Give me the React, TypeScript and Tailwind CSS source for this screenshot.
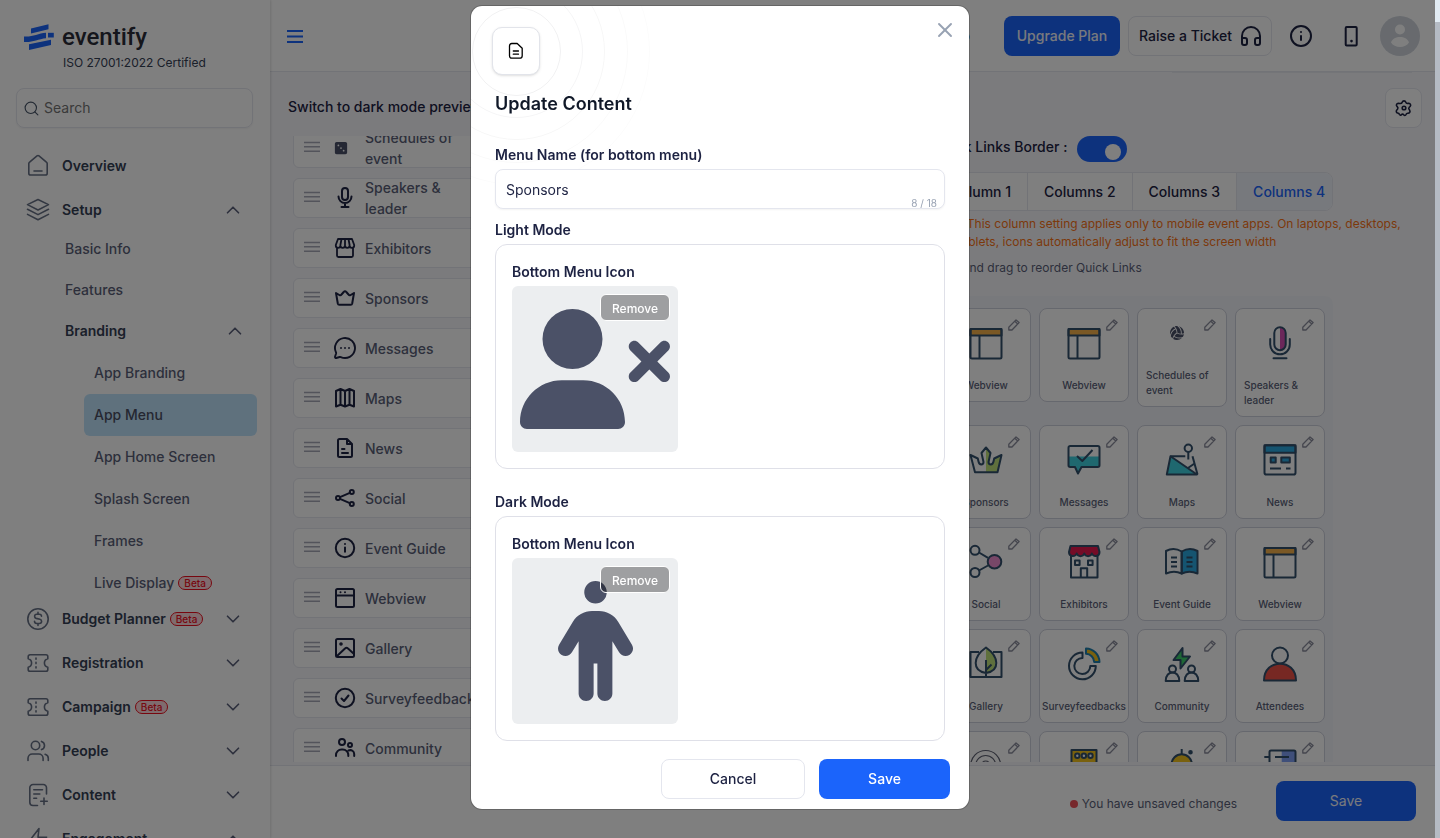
import type { ReactNode } from "react"
import { Headphones, Info, MessageCircleMore, Search, ChevronDown, ChevronUp, X } from "lucide-react"
import { FaDiceThree, FaPerson, FaUserXmark, FaVolleyball } from "react-icons/fa6"

type IconProps = { children: ReactNode; className?: string }

function Line({ children, className = "size-6" }: IconProps) {
  return (
    <svg
      aria-hidden="true"
      viewBox="0 0 24 24"
      fill="none"
      stroke="currentColor"
      strokeWidth="2"
      strokeLinecap="round"
      strokeLinejoin="round"
      className={`${className} shrink-0`}
    >
      {children}
    </svg>
  )
}

function Tile({ children }: { children: ReactNode }) {
  return (
    <svg
      aria-hidden="true"
      viewBox="0 0 34 34"
      fill="none"
      stroke="#33506d"
      strokeWidth="2"
      strokeLinejoin="round"
      className="size-[34px] overflow-visible"
    >
      {children}
    </svg>
  )
}

/* Sidebar icons */

const OverviewIcon = (
  <Line className="size-6 stroke-[1.6]">
    <path d="M2.8 9.6v9.6c0 1 .8 1.8 1.8 1.8h14.8c1 0 1.8-.8 1.8-1.8V9.6c0-.6-.3-1.1-.8-1.5L13 1.9a1.6 1.6 0 0 0-2 0L3.6 8.1c-.5.4-.8.9-.8 1.5z" />
    <path d="M8 17h8" />
  </Line>
)
const SetupIcon = (
  <Line className="size-6 stroke-[1.6]">
    <path d="M12 1.500 22.500 6.600 12 12 1.500 6.600z" />
    <path d="m1.500 11.300 10.500 5.300 10.500-5.300" />
    <path d="m1.500 16.400 10.500 5.300 10.500-5.300" />
  </Line>
)
const BudgetIcon = (
  <Line className="size-6 stroke-[1.6]">
    <circle cx="12" cy="12" r="10.200" />
    <path d="M8.500 14.300c0 1.300 1 2.200 2.300 2.200h2.600c1.200 0 2.200-1 2.200-2.200 0-1-.7-1.900-1.700-2.100l-3.700-.8a2.100 2.100 0 0 1-1.600-2.100c0-1.200 1-2.100 2.200-2.100h2.500c1.200 0 2.200.9 2.200 2.100M12 5.400v1.800m0 9.400v1.900" />
  </Line>
)
const TicketIcon = (
  <Line className="size-6 stroke-[1.6]">
    <path d="M4 3.800h16c1 0 1.800.8 1.800 1.800v2.200a4.300 4.300 0 0 0 0 8.400v2.200c0 1-.8 1.800-1.800 1.800H4c-1 0-1.800-.8-1.800-1.800v-2.200a4.300 4.300 0 0 0 0-8.400V5.600c0-1 .8-1.800 1.800-1.800z" />
    <path d="M10 7v1.200m0 3.200v1.200m0 3.200V17" />
  </Line>
)
const PeopleIcon = (
  <Line className="size-6 stroke-[1.6]">
    <circle cx="9.500" cy="6.500" r="4.200" />
    <path d="M2 21.500v-2.200a4.300 4.300 0 0 1 4.300-4.300h6.500a4.300 4.300 0 0 1 4.300 4.300v2.200M15.500 2.400a4.300 4.300 0 0 1 0 8.200M22.300 21.500v-2.200c0-2-1.300-3.600-3.200-4.100" />
  </Line>
)
const ContentIcon = (
  <Line className="size-6 stroke-[1.6]">
    <path d="M20.500 11V4.800c0-1.800-1.400-3.300-3.200-3.300H7C5.200 1.500 3.800 3 3.800 4.800v14.400c0 1.800 1.400 3.300 3.200 3.300h4.500M7.800 6.800h8.700M7.800 11h6M7.800 15.200h2.800M18 15v6.500M14.700 18.300h6.600" />
  </Line>
)
const EngageIcon = (
  <Line className="size-6 stroke-[1.6]">
    <path d="M13 1.500 3.500 13.800H12L11 22.500 20.500 10.200H12z" />
  </Line>
)

function BetaTag() {
  return (
    <span className="ml-1 rounded-full border border-[#ef0f1f] bg-[#ffd9dc] px-[5px] text-[10px] leading-3 font-medium text-[#ef0f1f]">
      Beta
    </span>
  )
}

const SECTIONS = [
  { title: "Budget Planner", icon: BudgetIcon, beta: true, up: false },
  { title: "Registration", icon: TicketIcon, beta: false, up: false },
  { title: "Campaign", icon: TicketIcon, beta: true, up: false },
  { title: "People", icon: PeopleIcon, beta: false, up: false },
  { title: "Content", icon: ContentIcon, beta: false, up: false },
  { title: "Engagement", icon: EngageIcon, beta: false, up: true },
]

const BRANDING = ["App Branding", "App Menu", "App Home Screen", "Splash Screen", "Frames", "Live Display"]

function Logo() {
  return (
    <a href="#" className="ml-6 flex h-[33px] shrink-0 items-center gap-2">
      <svg aria-hidden="true" viewBox="0 0 30 26" className="h-[26px] w-[30px] fill-[#1b64fb]">
        <path d="M7 4.500 24.500.2v5L7 9.500z" />
        <path d="M0 12.500c8 .8 14-3 22-3.700v5.500c-8 .8-14 4.500-22 3.700z" />
        <path d="M24 8.800h5.800v4.700H24z" />
        <path d="M5 20.300 27 15.700v5.200L5 26z" />
      </svg>
      <span className="font-['Roboto',sans-serif] text-2xl leading-8 font-medium text-[#2b2d38]">eventify</span>
    </a>
  )
}

function Sidebar() {
  return (
    <aside className="z-10 flex w-[270px] shrink-0 flex-col overflow-hidden bg-white pt-5 shadow-[1px_0_2px_rgba(0,0,0,0.12)]">
      <Logo />
      <p className="ml-[63px] text-xs leading-5 text-[#344054]">ISO 27001:2022 Certified</p>
      <label className="mt-[15px] mr-[17px] ml-4 flex h-10 shrink-0 items-center gap-1 rounded-lg border border-[#e4e6ee] px-1.5 shadow-xs">
        <Search className="size-[17px] shrink-0 text-[#475467]" strokeWidth={1.6} />
        <input
          type="text"
          aria-label="Search"
          placeholder="Search"
          className="w-full bg-transparent text-sm outline-none placeholder:text-[#757575]"
        />
      </label>

      <nav className="mt-[22px] text-sm text-[#5a5f78]">
        <a href="#" className="mb-3 flex h-8 items-center gap-3 pl-[26px] font-semibold text-[#344054]">
          <span className="text-[#667085]">{OverviewIcon}</span>
          Overview
        </a>
        <button className="flex h-8 w-full items-center gap-3 pr-[26px] pl-[26px] font-semibold text-[#344054]">
          <span className="text-[#667085]">{SetupIcon}</span>
          Setup
          <ChevronUp className="ml-auto size-[22px] text-[#5a607a]" strokeWidth={1.8} />
        </button>
        <ul className="mt-0.5 font-medium">
          <li>
            <a href="#" className="flex h-[41px] items-center pl-[65px]">Basic Info</a>
          </li>
          <li>
            <a href="#" className="flex h-[41px] items-center pl-[65px]">Features</a>
          </li>
          <li>
            <button className="flex h-[42px] w-full items-center pr-6 pl-[65px] font-semibold text-[#344054]">
              Branding
              <ChevronUp className="ml-auto size-[22px] text-[#5a607a]" strokeWidth={1.8} />
            </button>
            <ul className="-mb-px mr-[13px] ml-[84px]">
              {BRANDING.map((item) => (
                <li key={item}>
                  <a
                    href="#"
                    className={`flex h-[42px] items-center rounded-md pl-2.5 ${
                      item === "App Menu" ? "bg-[#bfe3fb] text-[#4a4e63]" : ""
                    }`}
                  >
                    {item}
                    {item === "Live Display" && <BetaTag />}
                  </a>
                </li>
              ))}
            </ul>
          </li>
        </ul>
        {SECTIONS.map((s) => (
          <button
            key={s.title}
            className="mb-3 flex h-8 w-full items-center pr-[26px] pl-[26px] font-semibold text-[#344054]"
          >
            <span className="mr-3 text-[#667085]">{s.icon}</span>
            {s.title}
            {s.beta && <BetaTag />}
            {s.up ? (
              <ChevronUp className="ml-auto size-[22px] text-[#5a607a]" strokeWidth={1.8} />
            ) : (
              <ChevronDown className="ml-auto size-[22px] text-[#5a607a]" strokeWidth={1.8} />
            )}
          </button>
        ))}
      </nav>
    </aside>
  )
}

function Header() {
  return (
    <header className="flex h-[72px] shrink-0 items-center border-b border-[#e4e6ee] bg-white pr-[15px] pl-[17px] text-[#1d2242]">
      <button aria-label="Toggle sidebar" className="text-[#1b64fb]">
        <svg aria-hidden="true" viewBox="0 0 16 14" className="h-3.5 w-4" stroke="currentColor" strokeWidth="2.200">
          <path d="M0 2h16M0 7.500h16M0 13h16" />
        </svg>
      </button>
      <a href="#" className="mr-[34px] ml-auto text-sm font-medium">Help</a>
      <button className="h-10 w-[116px] rounded-lg bg-[#1b64fb] text-sm font-medium text-[#f2f4fa]">Upgrade Plan</button>
      <button className="ml-2 flex h-10 w-36 items-center justify-between rounded-lg border border-[#e4e6ee] pr-2 pl-2.5 text-sm font-medium">
        Raise a Ticket
        <Headphones className="size-6" strokeWidth={2} />
      </button>
      <button aria-label="Information" className="ml-[17px]">
        <Info className="size-6" strokeWidth={2} />
      </button>
      <button aria-label="Mobile preview" className="ml-[26px]">
        <Line>
          <rect x="6.700" y="3" width="11" height="18.500" rx="1" />
          <path d="M12.500 17v.1" strokeWidth="2.600" />
        </Line>
      </button>
      <button aria-label="Account" className="ml-[17px]">
        <svg aria-hidden="true" viewBox="0 0 40 40" className="size-10">
          <circle cx="20" cy="20" r="20" fill="#d0d5dd" />
          <circle cx="20" cy="13.500" r="5" fill="#fff" />
          <path d="M11 26.500c1.500-4 5-5.500 9-5.500s7.500 1.500 9 5.500c-1.800 2.800-5.200 4.500-9 4.500s-7.200-1.700-9-4.500z" fill="#fff" />
        </svg>
      </button>
    </header>
  )
}

const MENU_ROWS: { name: string; icon: ReactNode }[] = [
  { name: "Schedules of event", icon: <FaDiceThree className="ml-px size-3.5 text-[#4a5068]" /> },
  {
    name: "Speakers & leader",
    icon: (
      <Line>
        <rect x="9" y="2" width="6" height="12" rx="3" />
        <path d="M5.500 10.500a6.500 6.500 0 0 0 13 0M12 17.500V21M8.500 21h7" />
      </Line>
    ),
  },
  {
    name: "Exhibitors",
    icon: (
      <Line className="size-6 stroke-[1.8]">
        <path d="M5 3h14l2.200 6v.5a2.300 2.300 0 0 1-4.600 0 2.300 2.300 0 0 1-4.600 0 2.300 2.300 0 0 1-4.600 0 2.300 2.300 0 0 1-4.600 0V9zM4 12v7.500c0 .8.700 1.500 1.500 1.500h13c.8 0 1.500-.7 1.500-1.500V12M8.500 3l-1.100 6M12 3v6M15.500 3l1.100 6" />
      </Line>
    ),
  },
  {
    name: "Sponsors",
    icon: (
      <Line>
        <path d="M3 7l1.800 10.500c.2.900.7 1.300 1.500 1.300h11.400c.8 0 1.300-.4 1.500-1.300L21 7l-3.300 2c-1 .6-1.700.3-2.200-.5L13.300 6c-.8-1-1.800-1-2.600 0L8.500 8.500c-.5.8-1.200 1.100-2.200.5z" />
      </Line>
    ),
  },
  { name: "Messages", icon: <MessageCircleMore className="size-6" strokeWidth={1.9} /> },
  {
    name: "Maps",
    icon: (
      <Line>
        <path d="M3 5l4.500-2L12 5l4.500-2L21 5v15.500l-4.500-1.800-4.500 1.800-4.500-1.800L3 20.500zM7.500 3v15.700M12 5v15.500M16.500 3v15.700" />
      </Line>
    ),
  },
  {
    name: "News",
    icon: (
      <Line>
        <path d="M14 3H6.500C5.700 3 5 3.700 5 4.500v15c0 .8.700 1.500 1.500 1.500h11c.8 0 1.500-.7 1.500-1.500V8zM14 3v5h5M9 13h2.500M9 17h6" />
      </Line>
    ),
  },
  {
    name: "Social",
    icon: (
      <Line>
        <circle cx="5" cy="12" r="2" />
        <circle cx="18.800" cy="6" r="2" />
        <circle cx="18.800" cy="18" r="2" />
        <path d="m7 11.200 9.800-4.300M7 12.800l9.800 4.300" />
      </Line>
    ),
  },
  {
    name: "Event Guide",
    icon: (
      <Line>
        <circle cx="12" cy="12" r="9.200" />
        <path d="M12 11.500v4.300M12 8v.1" />
      </Line>
    ),
  },
  {
    name: "Webview",
    icon: (
      <Line>
        <rect x="3" y="3" width="18" height="18" rx="1.500" />
        <path d="M3 9.500h18M7.500 6.200v.1M12 6.200v.1" />
      </Line>
    ),
  },
  {
    name: "Gallery",
    icon: (
      <Line>
        <rect x="3" y="3" width="18" height="18" rx="1.500" />
        <circle cx="8" cy="8" r=".8" />
        <path d="m4 20 8-7.500c1-.9 2-.9 3 0l5.500 5" />
      </Line>
    ),
  },
  {
    name: "Surveyfeedbacks",
    icon: (
      <Line>
        <circle cx="12" cy="12" r="9.200" />
        <path d="m8.500 12.500 2.500 2.500 4.500-5.500" />
      </Line>
    ),
  },
  {
    name: "Community",
    icon: (
      <Line>
        <circle cx="9" cy="6" r="3" />
        <circle cx="17" cy="9" r="2" />
        <path d="M3 20v-1a5.500 5.500 0 0 1 5.500-5.500h1.300A5.500 5.500 0 0 1 15.300 19v1M15.500 14.500c3-1.200 5.700.8 5.700 3.500v2" />
      </Line>
    ),
  },
]

function MenuList() {
  return (
    <section className="flex min-w-0 flex-1 flex-col pl-[18px]">
      <h2 className="flex h-16 shrink-0 items-center pt-1.5 text-sm font-medium text-[#1d2242]">
        Switch to dark mode preview
      </h2>
      <div className="min-h-0 flex-1 overflow-hidden pl-[5px]">
        <ul className="-mt-2 flex flex-col gap-2.5">
          {MENU_ROWS.map((row) => (
            <li
              key={row.name}
              className="flex h-10 w-[420px] items-center gap-2 rounded-md border border-[#e4e6ee] bg-white pl-2.5 text-[#1d2242]"
            >
              <svg aria-hidden="true" viewBox="0 0 16 12" className="mr-[5px] mb-0.5 h-3 w-4" stroke="#a6a8b6" strokeWidth="1.600">
                <path d="M0 1.500h16M0 5.800h16M0 10.200h16" />
              </svg>
              <span className="flex size-6 items-center">{row.icon}</span>
              <span className="w-[115px] text-sm leading-[21px] font-medium text-[#5a5f78]">{row.name}</span>
            </li>
          ))}
        </ul>
      </div>
    </section>
  )
}

/* Quick link tiles */

const webviewArt = (
  <Tile>
    <path d="M1.500 3h31v6.500h-31z" fill="#f5b04a" />
    <rect x="1.500" y="3" width="31" height="29.500" rx="1.500" />
    <path d="M10.500 9.500v23" />
  </Tile>
)

type QuickLink = { name: string; art: ReactNode; small?: boolean; iconOnly?: boolean }

const QUICK_LINKS: QuickLink[] = [
  { name: "Webview", art: webviewArt },
  { name: "Webview", art: webviewArt },
  { name: "Schedules of event", art: <FaVolleyball className="size-3.5 text-[#4a5068]" />, small: true },
  {
    name: "Speakers & leader",
    art: (
      <Tile>
        <path d="M17 1.200a5.700 5.700 0 0 1 5.700 5.700v11.400A5.700 5.700 0 0 1 17 24z" fill="#d64fb5" stroke="none" />
        <rect x="11.300" y="1.200" width="11.400" height="23" rx="5.700" />
        <path d="M7.200 13v5.500a9.800 9.800 0 0 0 19.600 0V13M10.500 32.200h13" strokeLinecap="round" />
      </Tile>
    ),
  },
  {
    name: "Sponsors",
    art: (
      <Tile>
        <path d="M17 4.500v24.700h11.500l4-17.200-7.700 3.500v3.500c0 3-4.300 3-4.300 0l1-9z" fill="#bfe07a" stroke="none" />
        <path d="M17 4.500 12.500 10l2 9c0 3-4.300 3.500-5-.5l-.7-3L1.500 12l4.500 17.200h22.500L32.500 12l-7.300 3.500-.7 3c-.7 4-5 3.500-5 .5l2-9z" />
      </Tile>
    ),
  },
  {
    name: "Messages",
    art: (
      <Tile>
        <path d="M1.500 13.500h31v8.800c0 1-.7 1.700-1.700 1.700H14.500L11 30l-3-6H3.200c-1 0-1.700-.7-1.700-1.700z" fill="#3fd0de" stroke="none" />
        <path d="M3.200 3h27.600c1 0 1.700.7 1.700 1.700v17.600c0 1-.7 1.700-1.700 1.700H14.500L11 30.500 8 24H3.200c-1 0-1.700-.7-1.700-1.700V4.700c0-1 .7-1.700 1.700-1.700z" />
        <path d="m10 13 5.300 5L25.500 7" />
      </Tile>
    ),
  },
  {
    name: "Maps",
    art: (
      <Tile>
        <path d="M5.500 13.200 32 31.500H1.800z" fill="#3fd0de" />
        <path d="M5.500 13.200h14.800M27.500 13.200 32.500 31.500M23 25l6.500-4.500" />
        <circle cx="23.300" cy="5.200" r="3.700" />
        <path d="M23.300 9v7.500" />
      </Tile>
    ),
  },
  {
    name: "News",
    art: (
      <Tile>
        <path d="M1.500 2.200h31v7.500h-31z" fill="#2aa8e0" />
        <rect x="1.500" y="2.200" width="31" height="29.300" rx="1.800" />
        <path d="M7.700 14.500h5v5h-5zM18.300 14.500h8.500v5h-8.500z" fill="#2aa8e0" />
        <path d="M7 25.500h11M23 25.500h4.500" />
      </Tile>
    ),
  },
  {
    name: "Social",
    art: (
      <Tile>
        <path d="m10 7.500 9 5.300M10 25.500l9-5" />
        <circle cx="6" cy="5.300" r="4.500" />
        <circle cx="6" cy="27.500" r="4.500" />
        <circle cx="25.500" cy="16.700" r="6.800" fill="#f08fd0" />
      </Tile>
    ),
  },
  {
    name: "Exhibitors",
    art: (
      <Tile>
        <path d="M4 10v22.500h26.500V10" />
        <path d="M3.500 1h27.500l1.500 6c0 5-6.200 5-7.600 1.500-1.400 3.500-6.200 3.500-7.600 0-1.400 3.500-6.200 3.500-7.600 0C8.300 12 2 12 2 7z" fill="#e8194f" />
        <path d="M8 15.500h4.600v4.600H8zM21 15.500h4.600v4.600H21zM13.800 32.500v-9.300h6.400v9.300" />
      </Tile>
    ),
  },
  {
    name: "Event Guide",
    art: (
      <Tile>
        <path d="M16.700 6.500c5-3 11-3 15.800-.5v22.500c-5-2.300-11-2.300-15.800 0z" fill="#2aa8e0" />
        <path d="M16.700 6.500c-5-3-11-3-15.700-.5v22.500c5-2.300 11-2.300 15.700 0z" />
        <path d="M6 12.500h6M6 17h6M6 21.500h6M21.500 12.500h6M21.500 17h6M21.500 21.500h6" />
      </Tile>
    ),
  },
  { name: "Webview", art: webviewArt },
  {
    name: "Gallery",
    art: (
      <Tile>
        <path d="M17 0c12 10 14 24 0 26z" fill="#bfe07a" stroke="none" />
        <path d="M10 5H1.500v25h31V5H24" />
        <path d="M17 .5C3.500 10 3 24 17 26 31 24 30.500 10 17 .500zM17 13v17M17 23l5.500-5.500" />
      </Tile>
    ),
  },
  {
    name: "Surveyfeedbacks",
    art: (
      <Tile>
        <path d="M15.500 5.500A13.400 13.400 0 1 0 28.800 19h-5.500a8 8 0 1 1-7.800-8z" />
        <path d="M19 1.500A13.800 13.800 0 0 1 32.500 15h-5.300A8.500 8.500 0 0 0 19 6.800z" fill="#f2c21d" stroke="#1f7fae" />
      </Tile>
    ),
  },
  {
    name: "Community",
    art: (
      <Tile>
        <path d="M17.500 1 8.500 13h7v8.500l9.500-12h-7.500z" fill="#3ccf6b" />
        <circle cx="7.500" cy="22" r="3.500" />
        <circle cx="26.500" cy="22" r="3.500" />
        <path d="M.7 34c0-11.500 13.600-11.500 13.600 0zM19.700 34c0-11.500 13.600-11.500 13.600 0z" />
      </Tile>
    ),
  },
  {
    name: "Attendees",
    art: (
      <Tile>
        <circle cx="17" cy="8.500" r="8" />
        <path d="M1 33.500c0-22.500 32-22.500 32 0z" fill="#ee5146" />
      </Tile>
    ),
  },
  {
    name: "Live Stream",
    iconOnly: true,
    art: (
      <svg aria-hidden="true" viewBox="0 0 34 34" fill="none" stroke="#5d6070" strokeWidth="1.200" className="size-[34px]">
        <circle cx="16.700" cy="16.500" r="15" />
        <circle cx="16.700" cy="16.500" r="10" />
        <circle cx="16.700" cy="16.500" r="4.500" />
      </svg>
    ),
  },
  {
    name: "Polls",
    iconOnly: true,
    art: (
      <Tile>
        <path d="M4.500 1h25v13h-9l-3.500 4-3.500-4h-9z" fill="#f2c21d" />
        <circle cx="10.300" cy="6.800" r="2.200" fill="#fff" />
        <circle cx="16.900" cy="6.800" r="2.200" fill="#fff" />
        <circle cx="23.500" cy="6.800" r="2.200" fill="#fff" />
      </Tile>
    ),
  },
  {
    name: "Ideas",
    iconOnly: true,
    art: (
      <Tile>
        <path d="M6.500 15.500a10.200 10.200 0 0 1 20.400 0c0 6-5 8-5 12h-10c0-4-5.400-6-5.400-12z" fill="#f2c21d" />
        <path d="M16.700 0v5" />
        <circle cx="25.500" cy="3.300" r="1.300" fill="#33506d" />
      </Tile>
    ),
  },
  {
    name: "Contacts",
    iconOnly: true,
    art: (
      <Tile>
        <path d="M18.700 1.500h13.500v30H18.700z" fill="#7f9ff5" stroke="none" />
        <rect x="6.500" y="1.500" width="26" height="30" rx="1.500" />
        <path d="M12 8h14M1.300 8h5" />
      </Tile>
    ),
  },
]

function QuickLinks() {
  return (
    <div className="mt-[19px] grid w-[400px] grid-cols-4 items-start gap-2 self-start rounded-lg bg-[#f1f3f8] px-2 pt-3 pb-3">
      {QUICK_LINKS.map((link, i) => (
        <div
          key={i}
          className="relative flex flex-col items-center gap-[18px] rounded-lg border border-[#cdd0dc] bg-white pt-[17px] pb-2"
        >
          <div className={link.small ? "size-6" : "size-[34px]"}>{link.art}</div>
          {!link.iconOnly && (
            <p className="flex w-full justify-center px-2 text-[10px] leading-[15px] font-medium text-[#5a5f78]">
              <span>{link.name}</span>
            </p>
          )}
          <button aria-label={`Edit ${link.name}`} className="absolute top-2.5 right-2.5 text-[#8a8c9c]">
            <svg
              aria-hidden="true"
              viewBox="0 0 12 12"
              fill="none"
              stroke="currentColor"
              strokeWidth="1.300"
              strokeLinejoin="round"
              className="size-3"
            >
              <path d="M.8 8.300 8 .9l3.100 2.700L4 11H.8zM6.800 2.200l3 2.700" />
            </svg>
          </button>
        </div>
      ))}
    </div>
  )
}

const COLUMN_TABS = ["Column 1", "Columns 2", "Columns 3", "Columns 4"]

function QuickLinkSettings() {
  return (
    <section className="flex w-[502px] shrink-0 flex-col overflow-hidden pr-[13px] text-[#1d2242]">
      <div className="mr-2.5 h-px w-60 shrink-0 self-end bg-[#e9eaf0]" />
      <button
        aria-label="Menu settings"
        className="mt-[15px] flex h-10 w-[37px] shrink-0 items-center justify-center self-end rounded-lg border border-[#e4e6ee] bg-white"
      >
        <svg
          aria-hidden="true"
          viewBox="0 0 18 18"
          fill="none"
          stroke="currentColor"
          strokeWidth="1.600"
          strokeLinejoin="round"
          className="size-[18px]"
        >
          <path d="M7.200 3.200a1.900 1.900 0 0 1 3.600 0c.3.900 1.100 1.400 2 1.200l1-.1a1.900 1.900 0 0 1 1.300 3.200l-.8.7c-.6.600-.7 1.500-.2 2.200l.6.900a1.900 1.900 0 0 1-1.700 2.900c-.9-.1-1.700.5-2 1.300a1.400 1.400 0 0 1-2.500.2c-.4-.8-1.500-.8-1.900 0a1.400 1.400 0 0 1-2.300-.4c-.2-.8-.9-1.200-1.700-1.300A1.800 1.800 0 0 1 1.800 11l.8-1c.5-.7.400-1.500-.2-2.100l-.5-.6A1.800 1.800 0 0 1 3.300 4.300l1.600.2c1 .1 2-.4 2.300-1.300z" />
          <circle cx="9" cy="9" r="1.800" />
        </svg>
      </button>
      <label className="mt-2 flex h-[26px] shrink-0 items-center text-sm font-medium">
        <span className="-mt-1">Quick Links Border :</span>
        <input type="checkbox" defaultChecked className="peer sr-only" />
        <span className="ml-2.5 flex h-[26px] w-[50px] items-end justify-end rounded-full bg-[#1b64fb] pr-1.5 pb-0.5">
          <span className="size-4 rounded-full bg-white" />
        </span>
      </label>
      <div className="mt-2.5 flex h-[39px] w-[400px] shrink-0 overflow-hidden rounded-lg border border-[#e4e6ee] bg-white text-sm font-medium whitespace-nowrap">
        {COLUMN_TABS.map((tab, i) => (
          <button
            key={tab}
            className={
              i === 3
                ? "flex-1 bg-[#eff3fb] pl-4 text-left text-[#1b64fb]"
                : "border-r border-[#e4e6ee] px-4"
            }
          >
            {tab}
          </button>
        ))}
      </div>
      <p className="mt-1 text-xs leading-[18px] text-[#f97316]">
        Note: This column setting applies only to mobile event apps. On laptops, desktops, and tablets, icons
        automatically adjust to fit the screen width
      </p>
      <p className="mt-2 text-xs leading-[18px] text-[#5a5f78]">Hold and drag to reorder Quick Links</p>
      <QuickLinks />
    </section>
  )
}

function ModeCard({ title, children }: { title: string; children: ReactNode }) {
  return (
    <section>
      <h3 className="text-sm leading-5 font-semibold">{title}</h3>
      <div className="mt-1 rounded-xl border border-[#dfe0e8] px-4 pt-[17px] pb-4">
        <p className="text-sm leading-5 font-semibold">Bottom Menu Icon</p>
        <div className="relative mt-1 flex size-[166px] items-center justify-center rounded-md bg-[#eceef0] text-[#4b5167]">
          {children}
          <button className="absolute top-2 right-2 h-[27px] w-[70px] rounded-md border border-white bg-black/33 pt-0.5 text-xs font-medium text-white">
            Remove
          </button>
        </div>
      </div>
    </section>
  )
}

function UpdateContentModal() {
  return (
    <div className="fixed inset-0 z-30 flex items-start justify-center overflow-hidden py-[5px]">
      <div
        role="dialog"
        aria-labelledby="modal-title"
        className="relative w-full max-w-[500px] overflow-hidden rounded-xl border border-black/20 bg-white bg-clip-padding text-[#1d2242]"
      >
        <svg
          aria-hidden="true"
          viewBox="0 0 180 180"
          fill="none"
          stroke="#101828"
          className="pointer-events-none absolute top-0 left-0 size-[180px]"
        >
          <circle cx="45.500" cy="45.500" r="44" strokeOpacity=".06" />
          <circle cx="45.500" cy="45.500" r="66" strokeOpacity=".045" />
          <circle cx="45.500" cy="45.500" r="88" strokeOpacity=".035" />
          <circle cx="45.500" cy="45.500" r="111" strokeOpacity=".025" />
          <circle cx="45.500" cy="45.500" r="133" strokeOpacity=".015" />
        </svg>
        <div className="relative pt-[21px] pr-[19px] pb-2.5 pl-6">
          <div className="flex items-start justify-between">
            <div className="-ml-[3px] flex size-12 items-center justify-center rounded-[10px] border border-[#e2e4ea] bg-white text-black shadow-sm">
              <svg
                aria-hidden="true"
                viewBox="0 0 16 18"
                fill="none"
                stroke="currentColor"
                strokeWidth="1.300"
                strokeLinecap="round"
                strokeLinejoin="round"
                className="h-[18px] w-4"
              >
                <path d="M3.800 1.500h5.400l5 4.800v7.400c0 1.500-1 2.500-2.400 2.500h-8c-1.400 0-2.300-1-2.300-2.500V4c0-1.500.9-2.500 2.300-2.500zM5.300 9h5.200M5.300 12.200h5.200" />
              </svg>
            </div>
            <button aria-label="Close" className="-mt-[9px] -mr-[7px] text-[#98a2b3]">
              <X className="size-6" strokeWidth={1.900} />
            </button>
          </div>
          <h2 id="modal-title" className="mt-[15px] text-lg leading-7 font-semibold text-[#101828]">
            Update Content
          </h2>
          <div className="mt-[27px] mr-[5px]">
            <label htmlFor="menu-name" className="block text-sm leading-5 font-semibold">
              Menu Name (for bottom menu)
            </label>
            <div className="relative mt-1">
              <input
                id="menu-name"
                type="text"
                maxLength={18}
                defaultValue="Sponsors"
                className="block h-10 w-full rounded-lg border border-[#e4e6ee] bg-white px-2.5 text-sm text-[#1d2242] shadow-xs"
              />
              <span className="absolute right-2 bottom-0 text-[10px] leading-3 text-[#98a2b3]">8 / 18</span>
            </div>
          </div>
          <div className="mt-[11px] mr-[5px] flex flex-col gap-[23px]">
            <ModeCard title="Light Mode">
              <FaUserXmark className="h-[120px] w-[150px]" />
            </ModeCard>
            <ModeCard title="Dark Mode">
              <FaPerson className="h-[120px] w-[75px]" />
            </ModeCard>
          </div>
          <div className="mt-[18px] flex justify-end gap-3.5 text-sm font-medium">
            <button className="h-10 w-36 rounded-lg border border-[#e4e6ee]">Cancel</button>
            <button className="h-10 w-[131px] rounded-lg bg-[#1b64fb] text-white">Save</button>
          </div>
        </div>
      </div>
    </div>
  )
}

export default function App() {
  return (
    <div className="flex h-screen overflow-hidden font-['Inter',sans-serif]">
      <div className="relative flex min-w-0 flex-1">
        <Sidebar />
        <div className="flex min-w-0 flex-1 flex-col bg-[#f7f7fb]">
          <Header />
          <main className="mb-[3px] flex min-h-0 flex-1">
            <MenuList />
            <QuickLinkSettings />
          </main>
          <footer className="flex shrink-0 items-center justify-end border-t border-[#e4e6ee] bg-white pt-[15px] pr-[19px] pb-[17px] text-xs text-[#5a5f78]">
            <p className="flex items-center gap-1 pt-1.5">
              <span className="size-2 rounded-full bg-[#ee5058]" />
              You have unsaved changes
            </p>
            <button className="ml-[39px] h-10 w-[140px] rounded-lg bg-[#1b64fb] text-sm text-[#f2f4fa]">Save</button>
          </footer>
        </div>
        <div className="absolute inset-0 z-20 bg-black/50" />
      </div>
      <div className="w-[5px] bg-[#b5bbc4]">
        <div className="h-[22px] bg-[#e2ebf3]" />
      </div>
      <UpdateContentModal />
    </div>
  )
}
